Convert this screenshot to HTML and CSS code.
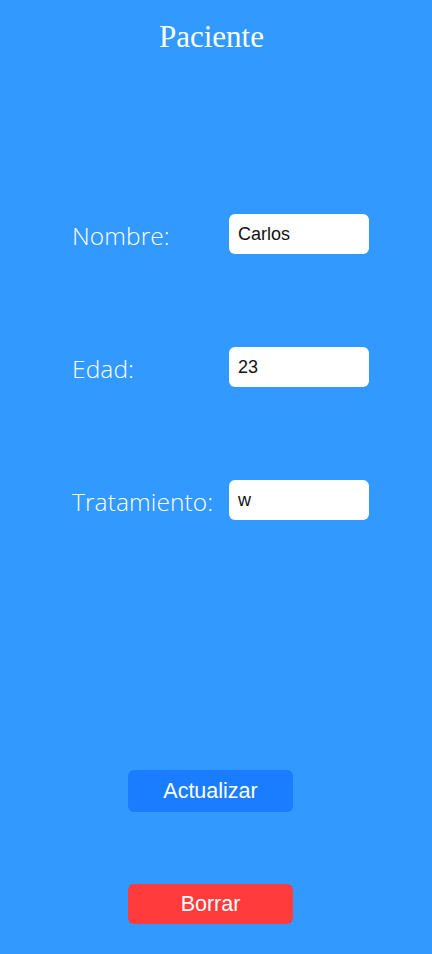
FILE: index.html
```html
<!DOCTYPE html>
<html lang="es">
<head>
<meta charset="utf-8">
<title>Paciente</title>
<link rel="stylesheet" href="styles.css">
</head>
<body>
<div class="screen">
  <h1 class="title">Paciente</h1>
  <div class="form">
    <div class="row">
      <span class="label">Nombre:</span>
      <div class="field">Carlos</div>
    </div>
    <div class="row">
      <span class="label">Edad:</span>
      <div class="field">23</div>
    </div>
    <div class="row">
      <span class="label">Tratamiento:</span>
      <div class="field">w</div>
    </div>
  </div>
  <div class="actions">
    <button class="btn btn-update">Actualizar</button>
    <button class="btn btn-delete">Borrar</button>
  </div>
</div>
</body>
</html>
```
FILE: styles.css
```css
html, body {
  margin: 0;
  padding: 0;
}
body {
  background: #3199ff;
  width: 432px;
  height: 954px;
  overflow: hidden;
}
.screen {
  display: flex;
  flex-direction: column;
  height: 954px;
}
.title {
  margin: 0;
  padding-top: 19px;
  padding-right: 9px;
  text-align: center;
  font-family: "Liberation Serif", serif;
  font-weight: normal;
  font-size: 31px;
  line-height: 36px;
  color: #ffffff;
}
.form {
  display: flex;
  flex-direction: column;
  gap: 93px;
  padding-top: 159px;
  padding-left: 72px;
}
.row {
  display: grid;
  grid-template-columns: 157px 140px;
  align-items: center;
  height: 40px;
}
.label {
  font-family: "Open Sans", sans-serif;
  font-weight: 300;
  font-size: 24.5px;
  letter-spacing: 0.1px;
  padding-top: 3px;
  color: #ffffff;
}
.field {
  height: 40px;
  box-sizing: border-box;
  background: #ffffff;
  border-radius: 6px;
  padding: 0 9px;
  display: flex;
  align-items: center;
  font-family: "Liberation Sans", sans-serif;
  font-size: 18px;
  color: #111111;
}
.actions {
  display: flex;
  flex-direction: column;
  align-items: flex-start;
  gap: 72px;
  padding-top: 250px;
  padding-left: 128px;
}
.btn {
  width: 165px;
  height: 42px;
  border: none;
  border-radius: 6px;
  font-family: "Liberation Sans", sans-serif;
  font-size: 21.5px;
  color: #ffffff;
  padding: 0;
}
.btn-update {
  background: #1a7dff;
}
.btn-delete {
  background: #ff3b3b;
  height: 40px;
}
```
